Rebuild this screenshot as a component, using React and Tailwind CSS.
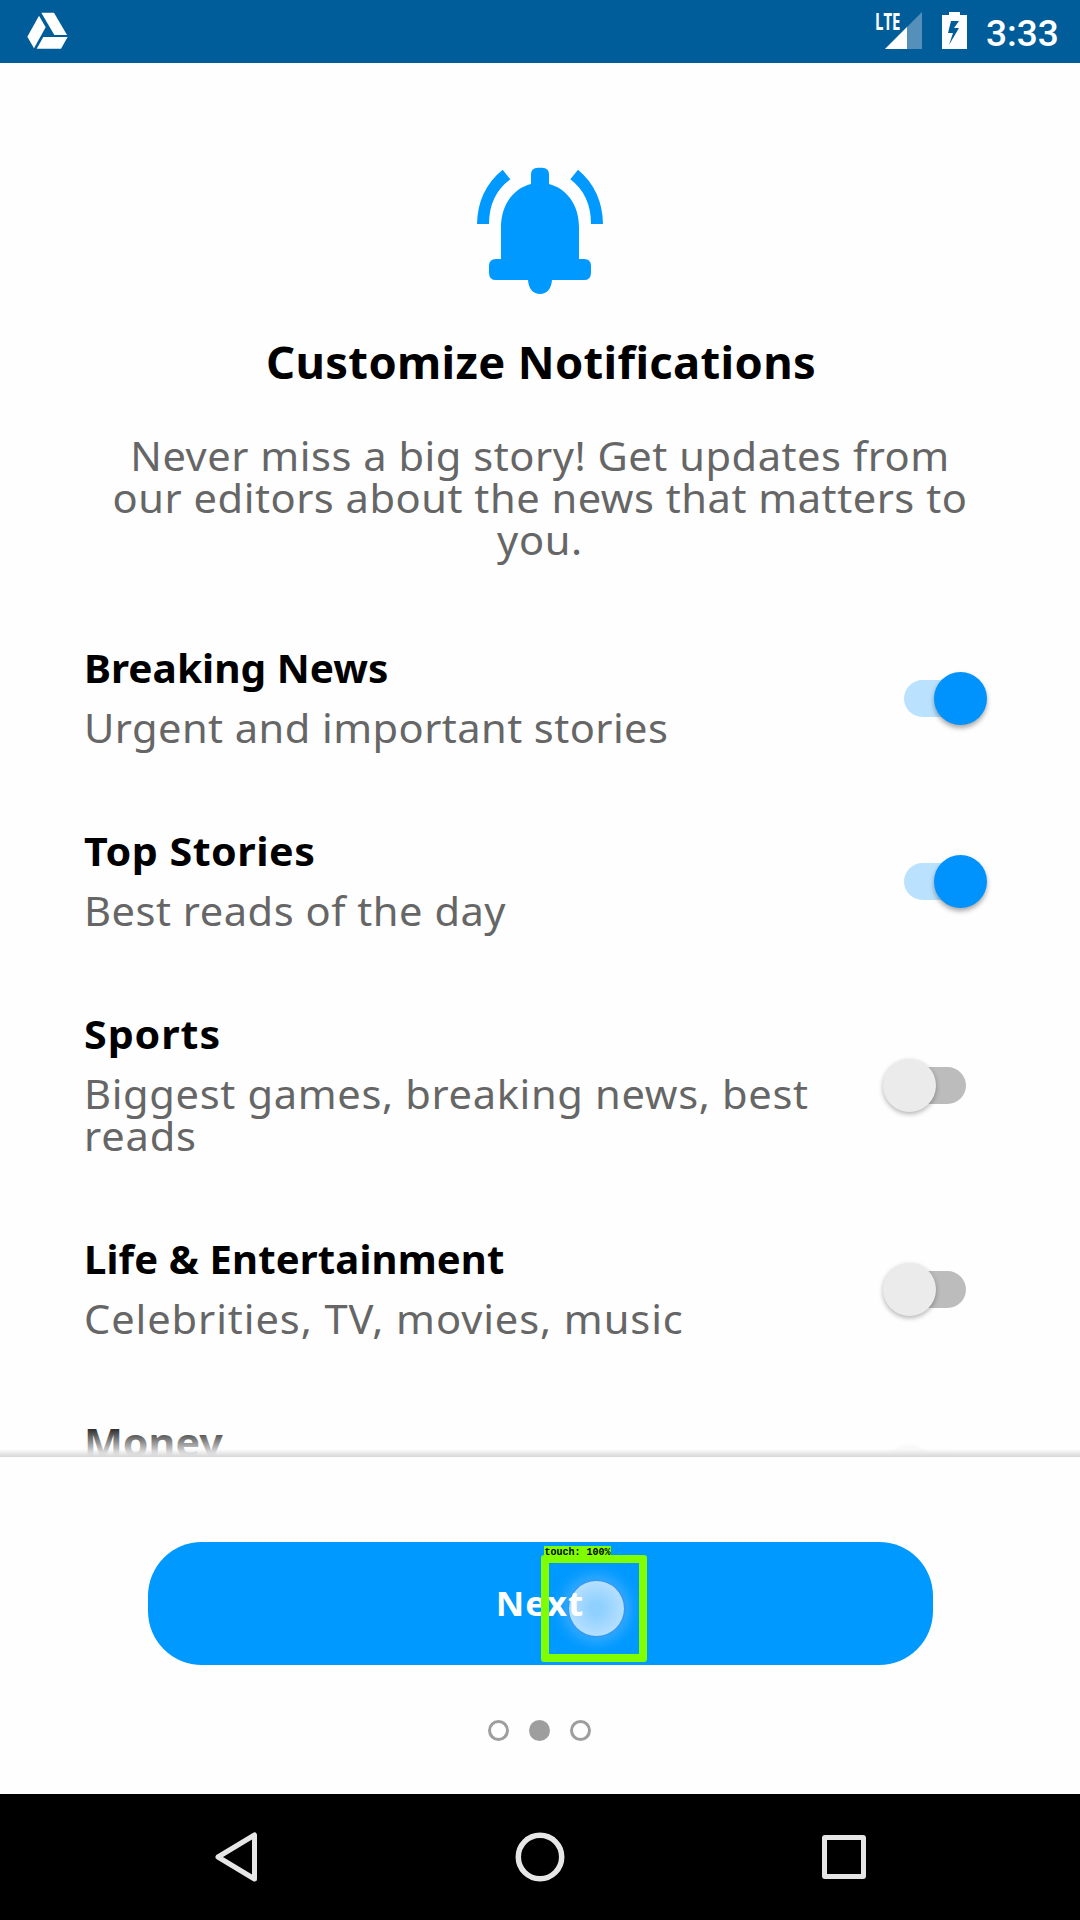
function DriveIcon() {
  return (
    <svg className="h-[63px] w-[120px]" viewBox="0 0 360 189" fill="#fff">
      <path d="M124 38h38l39 67h-38z" />
      <path d="M117 47l20 35-35 63-20-35z" />
      <path d="M130 111h73l-20 35h-73z" />
    </svg>
  );
}

function StatusBar() {
  return (
    <header className="flex h-[63px] shrink-0 items-center bg-[#005d9a] text-white">
      <DriveIcon />
      <div className="ml-auto flex h-full items-start">
        <div className="relative mt-[12px] h-[37px] w-[46px]">
          <svg className="h-[37px] w-[46px]" viewBox="0 0 46 37">
            <path d="M46 0V37H9z" fill="#5590bb" />
            <path d="M31 15V37H9z" fill="#fff" />
          </svg>
          <span className="absolute top-0 left-[-1px] origin-left scale-x-[0.65] font-['Open_Sans',sans-serif] text-[23px] leading-[18px] font-bold">
            LTE
          </span>
        </div>
        <svg className="mt-[12px] ml-[20px] h-[37px] w-[25px]" viewBox="0 0 25 37">
          <path
            fillRule="evenodd"
            fill="#fff"
            d="M7 0h11v3h7v34H0V3h7zM9 9L6 21h5L7 33 17 16h-5L17 9z"
          />
        </svg>
        <span className="mt-[12px] mr-[21px] ml-[19px] w-[73px] font-['Roboto',sans-serif] text-[37px] leading-[44px] font-medium">
          3:33
        </span>
      </div>
    </header>
  );
}

function BellIcon() {
  return (
    <svg
      className="mt-[77px] h-[180px] w-[200px] shrink-0 self-center"
      viewBox="0 0 600 540"
      fill="#0099ff"
    >
      <path d="M188 89L211 118Q147 165 147 252H111Q113 150 188 89z" />
      <path d="M414 89L391 118Q453 165 453 252H489Q487 150 414 89z" />
      <path d="M273 132V104Q273 83 294 83H306Q327 83 327 104V132C378 145 417 192 417 262V357H432Q453 357 453 378V398Q453 420 432 420H336C334 448 320 462 300 462C280 462 266 448 264 420H168Q147 420 147 398V378Q147 357 168 357H183V262C183 192 222 145 273 132z" />
    </svg>
  );
}

function Toggle({ on }) {
  return (
    <div className="ml-auto flex w-[104px] shrink-0 items-center">
      {on ? (
        <div className="ml-[21px] flex h-[37px] w-[62px] items-center rounded-full bg-[#bae2ff]">
          <div className="ml-[30px] size-[53px] shrink-0 rounded-full bg-[#0092fd] shadow-[0_3px_5px_rgba(0,0,0,0.35)]" />
        </div>
      ) : (
        <div className="ml-[21px] flex h-[37px] w-[62px] items-center rounded-full bg-[#bcbcbc]">
          <div className="ml-[-21px] size-[53px] shrink-0 rounded-full bg-[#ebebeb] shadow-[0_2px_5px_rgba(0,0,0,0.3)]" />
        </div>
      )}
    </div>
  );
}

const topics = [
  {
    title: "Breaking News",
    titleClass: "scale-x-[1.015]",
    lines: [["Urgent and important stories", "tracking-[0.42px]"]],
    on: true,
  },
  {
    title: "Top Stories",
    titleClass: "scale-x-[1.03] tracking-[0.5px]",
    lines: [["Best reads of the day", "tracking-[0.5px]"]],
    on: true,
  },
  {
    title: "Sports",
    titleClass: "scale-x-[1.03] tracking-[0.9px]",
    lines: [
      ["Biggest games, breaking news, best", "tracking-[0.64px]"],
      ["reads", "tracking-[0.8px]"],
    ],
    on: false,
  },
  {
    title: "Life & Entertainment",
    titleClass: "tracking-[0.15px]",
    lines: [["Celebrities, TV, movies, music", "tracking-[0.88px]"]],
    on: false,
  },
  { title: "Money", titleClass: "scale-x-[1.03]", lines: [["\u00a0", ""]], on: false },
];

function TopicRow({ title, titleClass, lines, on }) {
  return (
    <div className="flex shrink-0 items-center pr-[93px] pl-[84px]">
      <div className="pt-[40px] pb-[40px] text-[40px] leading-[42px] whitespace-nowrap">
        <h2 className={"origin-left font-bold text-black " + titleClass}>{title}</h2>
        <div className="mt-[18px] origin-left scale-x-[1.04] pb-px text-[#666]">
          {lines.map(([text, cls]) => (
            <p key={text} className={cls}>
              {text}
            </p>
          ))}
        </div>
      </div>
      <Toggle on={on} />
    </div>
  );
}

function TouchMarker() {
  return (
    <div className="absolute top-[4px] left-[393px]">
      <div className="absolute top-[9px] left-0 h-[107px] w-[106px] rounded-[3px] border-8 border-[#80ff00]" />
      <div className="absolute top-0 left-[3px] h-[11px] w-[67px] bg-[#80ff00] pl-px font-['Liberation_Mono',monospace] text-[10px] leading-[14px] font-bold whitespace-pre text-black">
        touch: 100%
      </div>
    </div>
  );
}

function NavBar() {
  return (
    <nav className="flex h-[126px] shrink-0 items-center justify-between bg-black pr-[214px] pl-[215px]">
      <svg
        className="h-[52px] w-[43px]"
        viewBox="0 0 43 52"
        fill="none"
        stroke="#e6e6e6"
        strokeWidth="5"
        strokeLinejoin="round"
      >
        <path d="M39.500 4V48L3 26z" />
      </svg>
      <svg
        className="h-[50px] w-[50px]"
        viewBox="0 0 50 50"
        fill="none"
        stroke="#e6e6e6"
        strokeWidth="5.500"
      >
        <circle cx="25" cy="25" r="21.700" />
      </svg>
      <div className="size-[44px] rounded-[3px] border-[5px] border-[#e6e6e6]" />
    </nav>
  );
}

export default function App() {
  return (
    <div className="flex h-[1920px] w-[1080px] flex-col overflow-hidden bg-[#fefefe] font-['Noto_Sans',sans-serif]">
      <StatusBar />
      <main className="relative flex h-[1394px] shrink-0 flex-col overflow-hidden">
        <BellIcon />
        <h1 className="mt-[12px] shrink-0 scale-x-[1.03] pl-[2px] text-center text-[44px] leading-[60px] font-bold tracking-[0.34px] text-black">
          Customize Notifications
        </h1>
        <div className="mt-[43px] shrink-0 scale-x-[1.04] text-center text-[40px] leading-[42px] whitespace-nowrap text-[#666]">
          <p className="tracking-[0.51px]">Never miss a big story! Get updates from</p>
          <p className="tracking-[0.5px]">our editors about the news that matters to</p>
          <p className="tracking-[0.6px]">you.</p>
        </div>
        <section className="mt-[46px] flex shrink-0 flex-col">
          {topics.map((topic) => (
            <TopicRow key={topic.title} {...topic} />
          ))}
        </section>
        <div className="absolute inset-x-0 bottom-0 h-[34px] bg-linear-to-b from-transparent to-[#fefefe]" />
        <div className="absolute inset-x-0 bottom-0 h-[8px] bg-linear-to-b from-transparent to-[#d6d6d6]" />
      </main>
      <footer className="flex h-[337px] shrink-0 flex-col items-center">
        <div className="relative mt-[85px] h-[123px] w-[785px]">
          <button className="block h-full w-full rounded-[54px] bg-[#0099ff] text-[34px] font-bold text-white">
            <span className="absolute top-[39px] left-[421px] size-[55px] rounded-full bg-[radial-gradient(circle,#8fd0ff_15%,#b5dfff_70%)] shadow-[0_0_2px_1px_rgba(70,130,220,0.7),0_0_14px_6px_rgba(120,195,255,0.5)]" />
            <span className="relative inline-block scale-x-[1.03] pl-[1px] tracking-[1.1px]">Next</span>
          </button>
          <TouchMarker />
        </div>
        <div className="mt-[55px] mr-[2px] flex gap-[20px]">
          <span className="size-[21px] rounded-full border-[3px] border-[#9e9e9e]" />
          <span className="size-[21px] rounded-full bg-[#9e9e9e]" />
          <span className="size-[21px] rounded-full border-[3px] border-[#9e9e9e]" />
        </div>
      </footer>
      <NavBar />
    </div>
  );
}
